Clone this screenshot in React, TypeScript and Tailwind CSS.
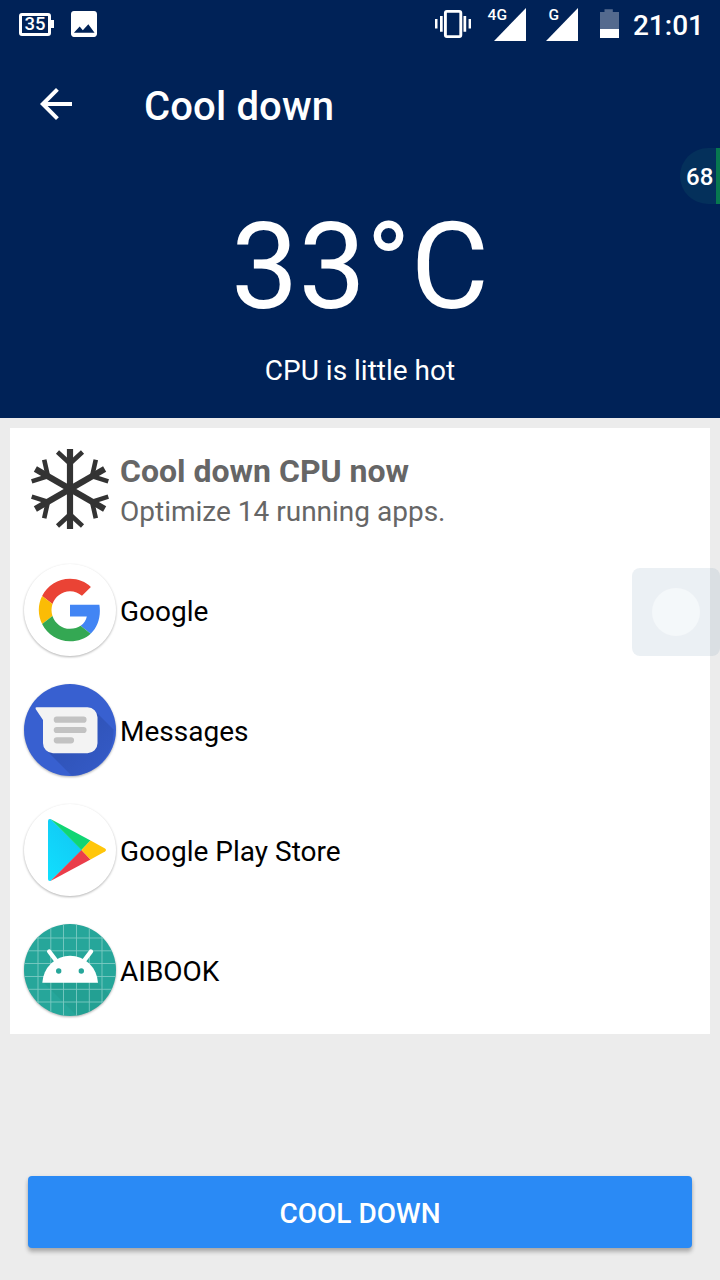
import { ReactNode } from 'react';

type AppItem = {
  name: string;
  icon: ReactNode;
};

const APPS: AppItem[] = [
  { name: 'Google', icon: <GoogleIcon /> },
  { name: 'Messages', icon: <MessagesIcon /> },
  { name: 'Google Play Store', icon: <PlayStoreIcon /> },
  { name: 'AIBOOK', icon: <AndroidIcon /> },
];

const SNOWFLAKE_ARMS = [0, 60, 120, 180, 240, 300];
const GRID_LINES = [16, 28.8, 41.5, 54.5, 67.3, 80];

export default function App() {
  return (
    <main className="relative flex h-[1280px] w-[720px] flex-col overflow-hidden bg-[#ececec] font-[Roboto,sans-serif]">
      <header className="flex h-[418px] flex-col bg-[#002257] text-white">
        <StatusBar />
        <div className="flex h-28 items-center pl-8">
          <button type="button" aria-label="Back">
            <svg className="size-12" viewBox="0 0 24 24" fill="currentColor">
              <path d="M20 11H7.83l5.59-5.59L12 4l-8 8 8 8 1.41-1.41L7.83 13H20v-2z" />
            </svg>
          </button>
          <h1 className="ml-16 pt-1.5 text-[40px] leading-[48px] font-medium tracking-[0.15px]">
            Cool down
          </h1>
        </div>
        <p className="pt-[37px] text-center text-[120px] leading-[140px]">
          33°C
        </p>
        <p className="pt-[17px] text-center text-[28px] leading-[33px]">
          CPU is little hot
        </p>
      </header>

      <section className="mx-2.5 mt-2.5 flex h-[606px] flex-col bg-white px-2.5 pt-0.5">
        <div className="flex h-[120px] items-center">
          <SnowflakeIcon />
          <div className="flex flex-col text-[#666]">
            <h2 className="text-[32px] leading-[38px] font-bold">
              Cool down CPU now
            </h2>
            <p className="pt-[5px] pb-px text-[28px] leading-[33px]">
              Optimize 14 running apps.
            </p>
          </div>
        </div>
        <ul>
          {APPS.map(({ name, icon }) => (
            <li key={name} className="flex h-[120px] items-center">
              <span className="flex w-[100px] justify-center">{icon}</span>
              <span className="pt-1 text-[28px] leading-[34px] text-black">
                {name}
              </span>
            </li>
          ))}
        </ul>
      </section>

      <button
        type="button"
        className="mx-7 mt-auto mb-8 h-[72px] rounded-[4px] bg-[#2a8af5] pt-1 text-[28px] font-medium text-white shadow-[0_4px_4px_rgba(0,0,0,0.24),0_1px_4px_rgba(0,0,0,0.1)]">
        COOL DOWN
      </button>

      <div className="absolute top-[148px] right-0 flex h-14 w-10 items-center rounded-l-full border-r-4 border-[#07784f] bg-[#04305b] pt-0.5 pl-1.5 text-2xl font-medium text-white">
        68
      </div>

      <div className="absolute top-[568px] right-0 flex size-[88px] items-center justify-center rounded-lg bg-[#3f7096]/10">
        <span className="size-12 rounded-full bg-[#fdffff]/50" />
      </div>
    </main>
  );
}

function StatusBar() {
  return (
    <div className="flex h-12 items-center pr-4 pl-[19px]">
      <div className="flex items-center">
        <span className="flex h-[23px] w-8 items-center justify-center rounded-[3px] border-3 border-white text-[18.5px] leading-none font-medium">
          35
        </span>
        <span className="h-2 w-[3px] bg-white" />
      </div>
      <svg
        className="ml-[17px] size-[26px]"
        viewBox="3 3 18 18"
        fill="currentColor">
        <path d="M21 19V5c0-1.1-.9-2-2-2H5c-1.1 0-2 .9-2 2v14c0 1.1.9 2 2 2h14c1.1 0 2-.9 2-2zM9 13.7l2.2 2.6L15 12.2l4.3 5.8H5z" />
      </svg>

      <div className="ml-auto flex items-center">
        <svg className="h-12 w-9" viewBox="0 0 36 48" fill="currentColor">
          <rect
            x="10.4"
            y="11.4"
            width="15.4"
            height="25.2"
            rx="1.5"
            fill="none"
            stroke="currentColor"
            strokeWidth="2.9"
          />
          <path d="M0 19h2.5v9.5H0zM5 16h2.7v15.7H5zM28.5 16h2.7v15.7h-2.7zM33.6 19H36v9.5h-2.4z" />
        </svg>
        <Signal label="4G" className="ml-4 w-[39px]" />
        <Signal label="G" className="ml-5 w-8" />
        <svg className="ml-[21px] h-12 w-5" viewBox="0 0 20 48">
          <path
            d="M1 12h4.5V9.3h8.3V12H20v17H1z"
            fill="white"
            fillOpacity="0.33"
          />
          <path d="M1 29h19v9H1z" fill="white" />
        </svg>
        <span className="ml-3.5 pt-1 text-[28px] leading-8 font-medium">
          21:01
        </span>
      </div>
    </div>
  );
}

type SignalProps = { label: string; className: string };
function Signal({ label, className }: SignalProps) {
  return (
    <div className={`relative flex h-12 justify-end ${className}`}>
      <span className="absolute top-1.5 right-[19px] text-[15.5px] leading-[18px] font-medium">
        {label}
      </span>
      <svg className="h-12 w-8" viewBox="0 0 32 48" fill="currentColor">
        <path d="M0 41L32 8v33z" />
      </svg>
    </div>
  );
}

function SnowflakeIcon() {
  return (
    <svg className="h-[100px] w-[100px]" viewBox="-50 -50 100 100">
      {SNOWFLAKE_ARMS.map((angle) => (
        <g
          key={angle}
          transform={`translate(0 -1) rotate(${angle})`}
          fill="none"
          stroke="#333">
          <path d="M0 0V-40" strokeWidth="6.2" />
          <path d="M-12.5 -37L0 -25.5L12.5 -37" strokeWidth="4.6" />
        </g>
      ))}
    </svg>
  );
}

// White or coloured disc with the soft launcher shadow under it
function IconDisc({ fill, children }: { fill: string; children: ReactNode }) {
  return (
    <svg
      className="size-24 drop-shadow-[0_1.5px_1px_rgba(0,0,0,0.3)]"
      viewBox="0 0 96 96">
      <circle cx="48" cy="48" r="46" fill={fill} />
      {children}
    </svg>
  );
}

function GoogleIcon() {
  return (
    <IconDisc fill="#fff">
      <g transform="translate(16.8 16.8) scale(1.3)">
        <path
          fill="#EA4335"
          d="M24 9.5c3.54 0 6.71 1.22 9.21 3.6l6.85-6.85C35.9 2.38 30.47 0 24 0 14.62 0 6.51 5.38 2.56 13.22l7.98 6.19C12.43 13.72 17.74 9.5 24 9.5z"
        />
        <path
          fill="#4285F4"
          d="M46.98 24.55c0-1.57-.15-3.09-.38-4.55H24v9.02h12.94c-.58 2.96-2.26 5.48-4.78 7.18l7.73 6c4.51-4.18 7.09-10.36 7.09-17.65z"
        />
        <path
          fill="#FBBC05"
          d="M10.53 28.59c-.48-1.45-.76-2.99-.76-4.59s.27-3.14.76-4.59l-7.98-6.19C.92 16.46 0 20.12 0 24c0 3.88.92 7.54 2.56 10.78l7.97-6.19z"
        />
        <path
          fill="#34A853"
          d="M24 48c6.48 0 11.93-2.13 15.89-5.81l-7.73-6c-2.15 1.45-4.92 2.3-8.16 2.3-6.26 0-11.57-4.22-13.47-9.91l-7.98 6.19C6.51 42.62 14.62 48 24 48z"
        />
      </g>
    </IconDisc>
  );
}

function MessagesIcon() {
  return (
    <IconDisc fill="#3860d0">
      <defs>
        <linearGradient id="fold" x1="0" y1="0" x2="1" y2="1">
          <stop offset="0.3" stopColor="#2747a0" />
          <stop offset="1" stopColor="#3358c4" />
        </linearGradient>
      </defs>
      <path
        d="M72 28L91.5 47.5A44 44 0 0 1 50 94L24 68z"
        fill="url(#fold)"
        fillOpacity="0.55"
      />
      <path
        d="M14.5 25.3H65.5a10 10 0 0 1 10 10V61.3a10 10 0 0 1-10 10H31a10 10 0 0 1-10-10V38L13.8 27.3q-1-2 .7-2z"
        fill="#f3f3f3"
      />
      <path
        d="M34.8 37.7H61.5M34.8 48H61.5M34.8 58.3H49"
        stroke="#c2c2c2"
        strokeWidth="6.2"
        strokeLinecap="round"
      />
    </IconDisc>
  );
}

function PlayStoreIcon() {
  return (
    <IconDisc fill="#fff">
      <defs>
        <linearGradient id="cyan" x1="0" y1="1" x2="0.6" y2="0">
          <stop offset="0" stopColor="#10e0ff" />
          <stop offset="1" stopColor="#12c8f4" />
        </linearGradient>
      </defs>
      <path
        d="M28.5 17L60 48L28.5 79Q26 79.5 26 77V19Q26 16.5 28.5 17z"
        fill="url(#cyan)"
      />
      <path d="M28.5 17L68.5 38.5L59.5 48z" fill="#10d574" />
      <path d="M28.5 79L68.5 57.5L59.5 48z" fill="#ea3d4a" />
      <path
        d="M68.5 38.5L83 46.5Q85 48 83 49.5L68.5 57.5L59.5 48z"
        fill="#ffc60a"
      />
    </IconDisc>
  );
}

function AndroidIcon() {
  return (
    <IconDisc fill="#26a69a">
      <clipPath id="disc">
        <circle cx="48" cy="48" r="46" />
      </clipPath>
      <g clipPath="url(#disc)">
        <path d="M22 61H76L88 73L68 96H57z" fill="#1f9184" fillOpacity="0.3" />
        {GRID_LINES.map((pos) => (
          <path
            key={pos}
            d={`M${pos} 0V96M0 ${pos}H96`}
            stroke="#7bcac2"
            strokeWidth="0.9"
          />
        ))}
      </g>
      <path d="M20.3 60.7A27.9 28.7 0 0 1 76 60.7z" fill="#fff" />
      <path
        d="M27.2 29.5L34 38.5M69 29.5L62.2 38.5"
        stroke="#fff"
        strokeWidth="4.4"
        strokeLinecap="round"
      />
      <circle cx="36.7" cy="49" r="2.7" fill="#26a69a" />
      <circle cx="59.3" cy="49" r="2.7" fill="#26a69a" />
    </IconDisc>
  );
}
